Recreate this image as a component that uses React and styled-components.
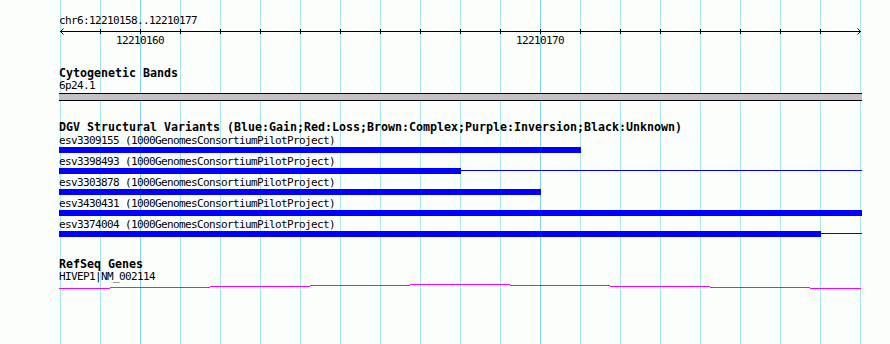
import styled, { createGlobalStyle } from "styled-components"

const GlobalStyle = createGlobalStyle`
    body {
        margin:0;
        background:#fcfefc;
    }
`

const TRACK_WIDTH = 803
const BP_WIDTH = 40

const Page = styled.div`
    width:890px;
    height:344px;
    box-sizing:border-box;
    padding:15px 0 0 59px;
    overflow:hidden;
    font-family:"DejaVu Sans Mono", "Liberation Mono", monospace;
    color:#000;
    background:
        linear-gradient(#80d2f2, #80d2f2) 140px 0 / 1px 100% no-repeat,
        linear-gradient(#80d2f2, #80d2f2) 540px 0 / 1px 100% no-repeat,
        repeating-linear-gradient(90deg, #a6eaf0 0 1px, transparent 1px 40px) 60px 0 / 801px 100% no-repeat,
        #fcfefc;
`
const Label = styled.div`
    font-size:11px;
    letter-spacing:-0.62px;
    line-height:12px;
    height:12px;
    white-space:pre;
`
const Track = styled.section`
    width:${TRACK_WIDTH}px;
    margin-top:${props => props.$gap}px;
`
const TrackTitle = styled.div`
    font-size:11.63px;
    font-weight:bold;
    line-height:13px;
    height:13px;
    white-space:pre;
`
const Axis = styled.svg`
    display:block;
`
const TickLabels = styled.div`
    position:relative;
    height:12px;
`
const TickLabel = styled(Label)`
    position:absolute;
    top:0;
    transform:translateX(-50%);
`
const Band = styled.div`
    margin-top:1px;
    height:6px;
    border-top:1px solid #000;
    border-bottom:1px solid #000;
    background:#c3c1c6;
`
const Rows = styled.div`
    margin-top:1px;
    display:flex;
    flex-direction:column;
    gap:3px;
`
const Feature = styled.div`
    display:flex;
    flex-direction:column;
`
const Glyph = styled.div`
    display:flex;
    height:6px;
`
const Block = styled.div`
    height:6px;
    background:#0000ff;
    flex-shrink:0;
`
const Connector = styled.div`
    flex:1;
    height:1px;
    margin-top:2px;
    background:#0000ff;
`
const GeneLine = styled.svg`
    display:block;
`

const variants = [
    { id: "esv3309155", width: 522 },
    { id: "esv3398493", width: 402, tail: true },
    { id: "esv3303878", width: 482 },
    { id: "esv3430431", width: 803 },
    { id: "esv3374004", width: 762, tail: true },
]

// gene line steps: [x0, x1, y] in track coords
const geneSteps = [
    [0, 51, 5], [51, 151, 4], [151, 251, 3], [251, 351, 2], [351, 451, 1],
    [451, 551, 2], [551, 651, 3], [651, 751, 4], [751, 802, 5],
]

const Ruler = () => {
    const ticks = []
    for (let i = 1; i < 20; i++) ticks.push(1 + i * BP_WIDTH)
    return (
        <Track $gap={0}>
            <Label>chr6:12210158..12210177</Label>
            <Axis width={TRACK_WIDTH} height="8" shapeRendering="crispEdges">
                <line x1="1" y1="4.5" x2="802" y2="4.5" stroke="#000" />
                {ticks.map(x => (
                    <line key={x} x1={x + 0.5} y1="2" x2={x + 0.5} y2="7" stroke="#000" />
                ))}
                <path d="M4.5 1.5 L1.5 4.5 L4.5 7.5" fill="none" stroke="#000" shapeRendering="auto" />
                <path d="M798.5 1.5 L801.5 4.5 L798.5 7.5" fill="none" stroke="#000" shapeRendering="auto" />
            </Axis>
            <TickLabels>
                <TickLabel style={{ left: 81 }}>12210160</TickLabel>
                <TickLabel style={{ left: 481 }}>12210170</TickLabel>
            </TickLabels>
        </Track>
    )
}

const App = () => {
    return (
        <Page>
            <GlobalStyle />
            <Ruler />
            <Track $gap={20}>
                <TrackTitle>Cytogenetic Bands</TrackTitle>
                <Label>6p24.1</Label>
                <Band />
            </Track>
            <Track $gap={20}>
                <TrackTitle>DGV Structural Variants (Blue:Gain;Red:Loss;Brown:Complex;Purple:Inversion;Black:Unknown)</TrackTitle>
                <Rows>
                    {variants.map(v => (
                        <Feature key={v.id}>
                            <Label>{v.id} (1000GenomesConsortiumPilotProject)</Label>
                            <Glyph>
                                <Block style={{ width: v.width }} />
                                {v.tail && <Connector />}
                            </Glyph>
                        </Feature>
                    ))}
                </Rows>
            </Track>
            <Track $gap={21}>
                <TrackTitle>RefSeq Genes</TrackTitle>
                <Label>HIVEP1|NM_002114</Label>
                <GeneLine width={TRACK_WIDTH} height="7" shapeRendering="crispEdges">
                    {geneSteps.map(([a, b, y]) => (
                        <line key={a} x1={a} y1={y + 0.5} x2={b} y2={y + 0.5} stroke="#ff00ff" />
                    ))}
                </GeneLine>
            </Track>
        </Page>
    )
}

export default App
